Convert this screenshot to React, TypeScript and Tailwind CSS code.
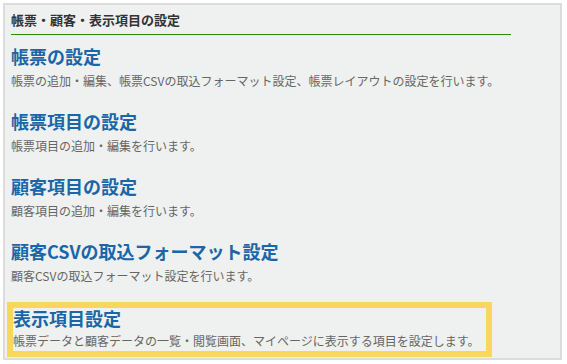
import React from 'react';

interface SettingItem {
  title: string;
  desc: string;
}

const items: SettingItem[] = [
  { title: '帳票の設定', desc: '帳票の追加・編集、帳票CSVの取込フォーマット設定、帳票レイアウトの設定を行います。' },
  { title: '帳票項目の設定', desc: '帳票項目の追加・編集を行います。' },
  { title: '顧客項目の設定', desc: '顧客項目の追加・編集を行います。' },
  { title: '顧客CSVの取込フォーマット設定', desc: '顧客CSVの取込フォーマット設定を行います。' },
];

const font = { fontFamily: '"Noto Sans CJK JP", "Noto Sans", sans-serif' };

const App: React.FC = () => {
  return (
    <div className="w-[567px] h-[364px] bg-white p-[3px]" style={font}>
      <div className="w-[559px] h-[357px] border-2 border-[#dcdcdc] bg-[#eff1f0]">
        <div className="ml-[6px] w-[500px] pt-[5px] pb-[4px] border-b border-[#338a00]">
          <h2 className="text-[13px] leading-[20px] font-bold text-[#333]">帳票・顧客・表示項目の設定</h2>
        </div>

        <div className="mt-[9px] flex flex-col gap-[18px] pl-[6px]">
          {items.map((it) => (
            <div key={it.title}>
              <h3 className="text-[18px] leading-[24px] font-bold text-[#1a66a8]">{it.title}</h3>
              <p className="mt-[3px] text-[12px] leading-[20px] text-[#666]">{it.desc}</p>
            </div>
          ))}
        </div>

        <div className="mt-[16px] ml-[2px] w-[485px] border-[6px] border-[#f8d75c]">
          <h3 className="text-[18px] leading-[20px] font-bold text-[#1a66a8]">表示項目設定</h3>
          <p className="mt-[3px] text-[12px] leading-[20px] text-[#666]">
            帳票データと顧客データの一覧・閲覧画面、マイページに表示する項目を設定します。
          </p>
        </div>
      </div>
    </div>
  );
};

export default App;
